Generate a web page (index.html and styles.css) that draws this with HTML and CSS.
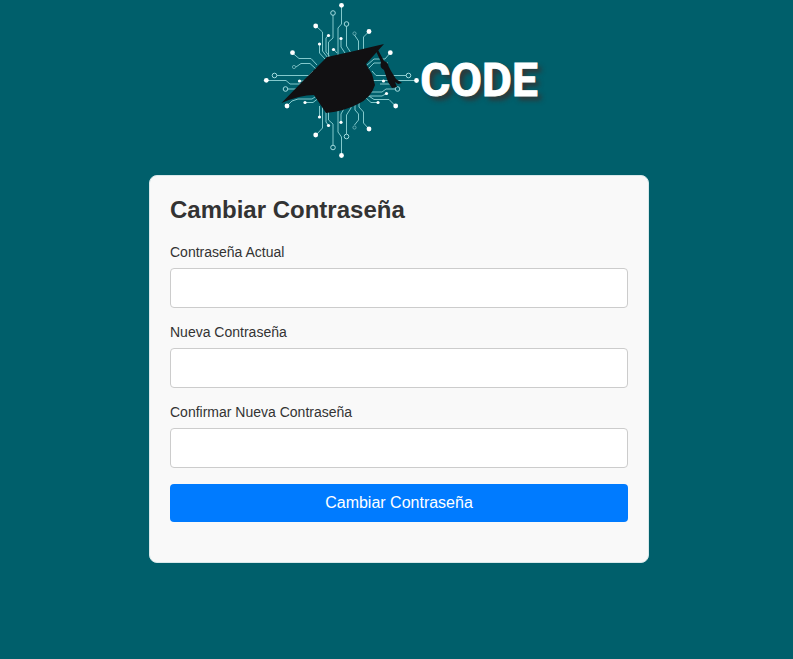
FILE: index.html
```html
<!DOCTYPE html>
<html lang="es">
<head>
<meta charset="utf-8">
<meta name="viewport" content="width=device-width, initial-scale=1">
<title>Cambiar Contraseña</title>
<link rel="stylesheet" href="styles.css">
</head>
<body>
<header class="brand">
  <svg class="brand-mark" viewBox="263 0 156 160" aria-hidden="true">
    <g class="trace">
      <path d="M341.5 5V24L338 28V60M333 15V38L328.5 42V60M316 26L322.5 32V51L328 58M328.5 35L326 38V52L331 58M319.5 44V53L325 59M333.5 49L337 53M341 38V47L345 53M346.5 26V46L351 53M354.5 35L358.5 41V52M369 31.5L363.5 37V52"/>
      <path d="M292.5 53L299 58.5H311L317 65M296 67L301 63.5H310L316 69M277 75.5H309L313 71M266 80.5H286L290 84H302M299 81H306M288 89H300M287 106L292 101L298 99H312L318 95M305 102.5H313L320 97"/>
      <path d="M319.5 117V106M316 135L322.5 128V106M328.5 125.5L326 122V108M333 145V124L328.5 120V108M341.5 155V137L338 132V106M341 122V114L345 107M346.5 134V115L351 108V102M354.5 125L358.5 120V114L355 110V102M369 129L363.5 123V112L359 107V102"/>
      <path d="M390.5 52.5L385 59H374L366 66M388 63H374L368 69M406 75.5H376L372 71M416 80.5H370M397 89H386L382 92H368M386.5 93.5L382 96H368M395.5 106L389 99.5H374L366 94M378 102.5H371L365 97M380 84H390"/>
    </g>
    <g class="ring">
      <circle cx="333" cy="13" r="2.3"/><circle cx="346.5" cy="24" r="2.3"/><circle cx="274.5" cy="75.5" r="2.3"/><circle cx="408.5" cy="75.5" r="2.3"/><circle cx="285.5" cy="89" r="2.3"/><circle cx="397.5" cy="89" r="2.3"/><circle cx="333" cy="147.5" r="2.3"/><circle cx="346.5" cy="136.5" r="2.3"/>
      <g class="faint"><circle cx="354.5" cy="33.5" r="1.6"/><circle cx="294" cy="67" r="1.6"/><circle cx="354.5" cy="127.5" r="1.6"/></g>
    </g>
    <g class="dot">
      <circle cx="341.5" cy="5.3" r="2.4"/><circle cx="315.7" cy="26" r="2.4"/><circle cx="369" cy="31.5" r="2.4"/><circle cx="292.5" cy="52.7" r="2.4"/><circle cx="390.3" cy="52.7" r="2.4"/><circle cx="266.3" cy="80.3" r="2.4"/><circle cx="416.5" cy="80.5" r="2.4"/><circle cx="287" cy="106" r="2.4"/><circle cx="395.7" cy="106" r="2.4"/><circle cx="315.7" cy="135" r="2.4"/><circle cx="369" cy="129" r="2.4"/><circle cx="341.5" cy="155.5" r="2.4"/>
      <circle cx="328.5" cy="35.5" r="1.6"/><circle cx="319.5" cy="44" r="1.6"/><circle cx="333.5" cy="49.5" r="1.6"/><circle cx="341" cy="38.5" r="1.6"/><circle cx="299.5" cy="81" r="1.6"/><circle cx="305" cy="102.5" r="1.6"/><circle cx="319.5" cy="117" r="1.6"/><circle cx="328.5" cy="125.5" r="1.6"/><circle cx="341" cy="122.3" r="1.6"/><circle cx="378" cy="102.5" r="1.6"/><circle cx="386.5" cy="93.5" r="1.6"/><circle cx="383.5" cy="81" r="1.6"/>
    </g>
    <g class="cap">
      <path d="M384 44Q355 51 327 57L300 84L281.5 103Q300 95 314 95L326 113Q345 111 358 104Q371 98 375 85L372 74L366 64Z"/>
      <path d="M375 49L377 48L384 61Q388 62 388.5 66L391 71L396 79L402 83L398 84L395 82L397 87L392 88L388 82L384 70Q379 67 381 62Z"/>
    </g>
  </svg>
  <span class="brand-name">CODE</span>
</header>
<main class="card">
  <h1 class="title">Cambiar Contraseña</h1>
  <form>
    <div class="field">
      <label for="current">Contraseña Actual</label>
      <input id="current" type="password">
    </div>
    <div class="field">
      <label for="new">Nueva Contraseña</label>
      <input id="new" type="password">
    </div>
    <div class="field">
      <label for="confirm">Confirmar Nueva Contraseña</label>
      <input id="confirm" type="password">
    </div>
    <button class="submit" type="submit">Cambiar Contraseña</button>
  </form>
</main>
</body>
</html>
```
FILE: styles.css
```css
* { box-sizing: border-box; }

body {
  margin: 0;
  padding: 0 0 16px 5px;
  background: #005f6b;
  color: #333;
  font-family: "Liberation Sans", Arial, sans-serif;
}

.brand {
  display: flex;
  justify-content: center;
  align-items: center;
  gap: 1px;
  margin-bottom: 15px;
  padding-left: 3px;
}

.brand-mark {
  width: 156px;
  height: 160px;
}

.trace {
  fill: none;
  stroke: #83c9cc;
  stroke-width: 1;
}

.ring {
  fill: #005f6b;
  stroke: #a5dcdf;
}

.faint { opacity: 0.6; }

.dot { fill: #fff; }

.cap { fill: #111012; }

.brand-name {
  color: #fff;
  font: bold 46px/48px Roboto, sans-serif;
  -webkit-text-stroke: 1px #fff;
  text-shadow: 4px 4px 5px #333;
}

.card {
  max-width: 500px;
  margin: 0 auto;
  padding: 20px 20px 40px;
  background: #f9f9f9;
  border: 1px solid #d8e8ea;
  border-radius: 8px;
}

.title {
  margin: 0 0 20px;
  font-size: 24px;
  line-height: 28px;
}

.field { margin-bottom: 16px; }

.field label {
  display: block;
  margin-bottom: 8px;
  font-size: 14px;
  line-height: 16px;
}

.field input {
  display: block;
  width: 100%;
  height: 40px;
  padding: 8px;
  border: 1px solid #ccc;
  border-radius: 4px;
  background: #fff;
  font: inherit;
}

.submit {
  display: block;
  width: 100%;
  padding: 10px;
  border: 0;
  border-radius: 4px;
  background: #007bff;
  color: #fff;
  font: 16px/18px "Liberation Sans", Arial, sans-serif;
}
```
